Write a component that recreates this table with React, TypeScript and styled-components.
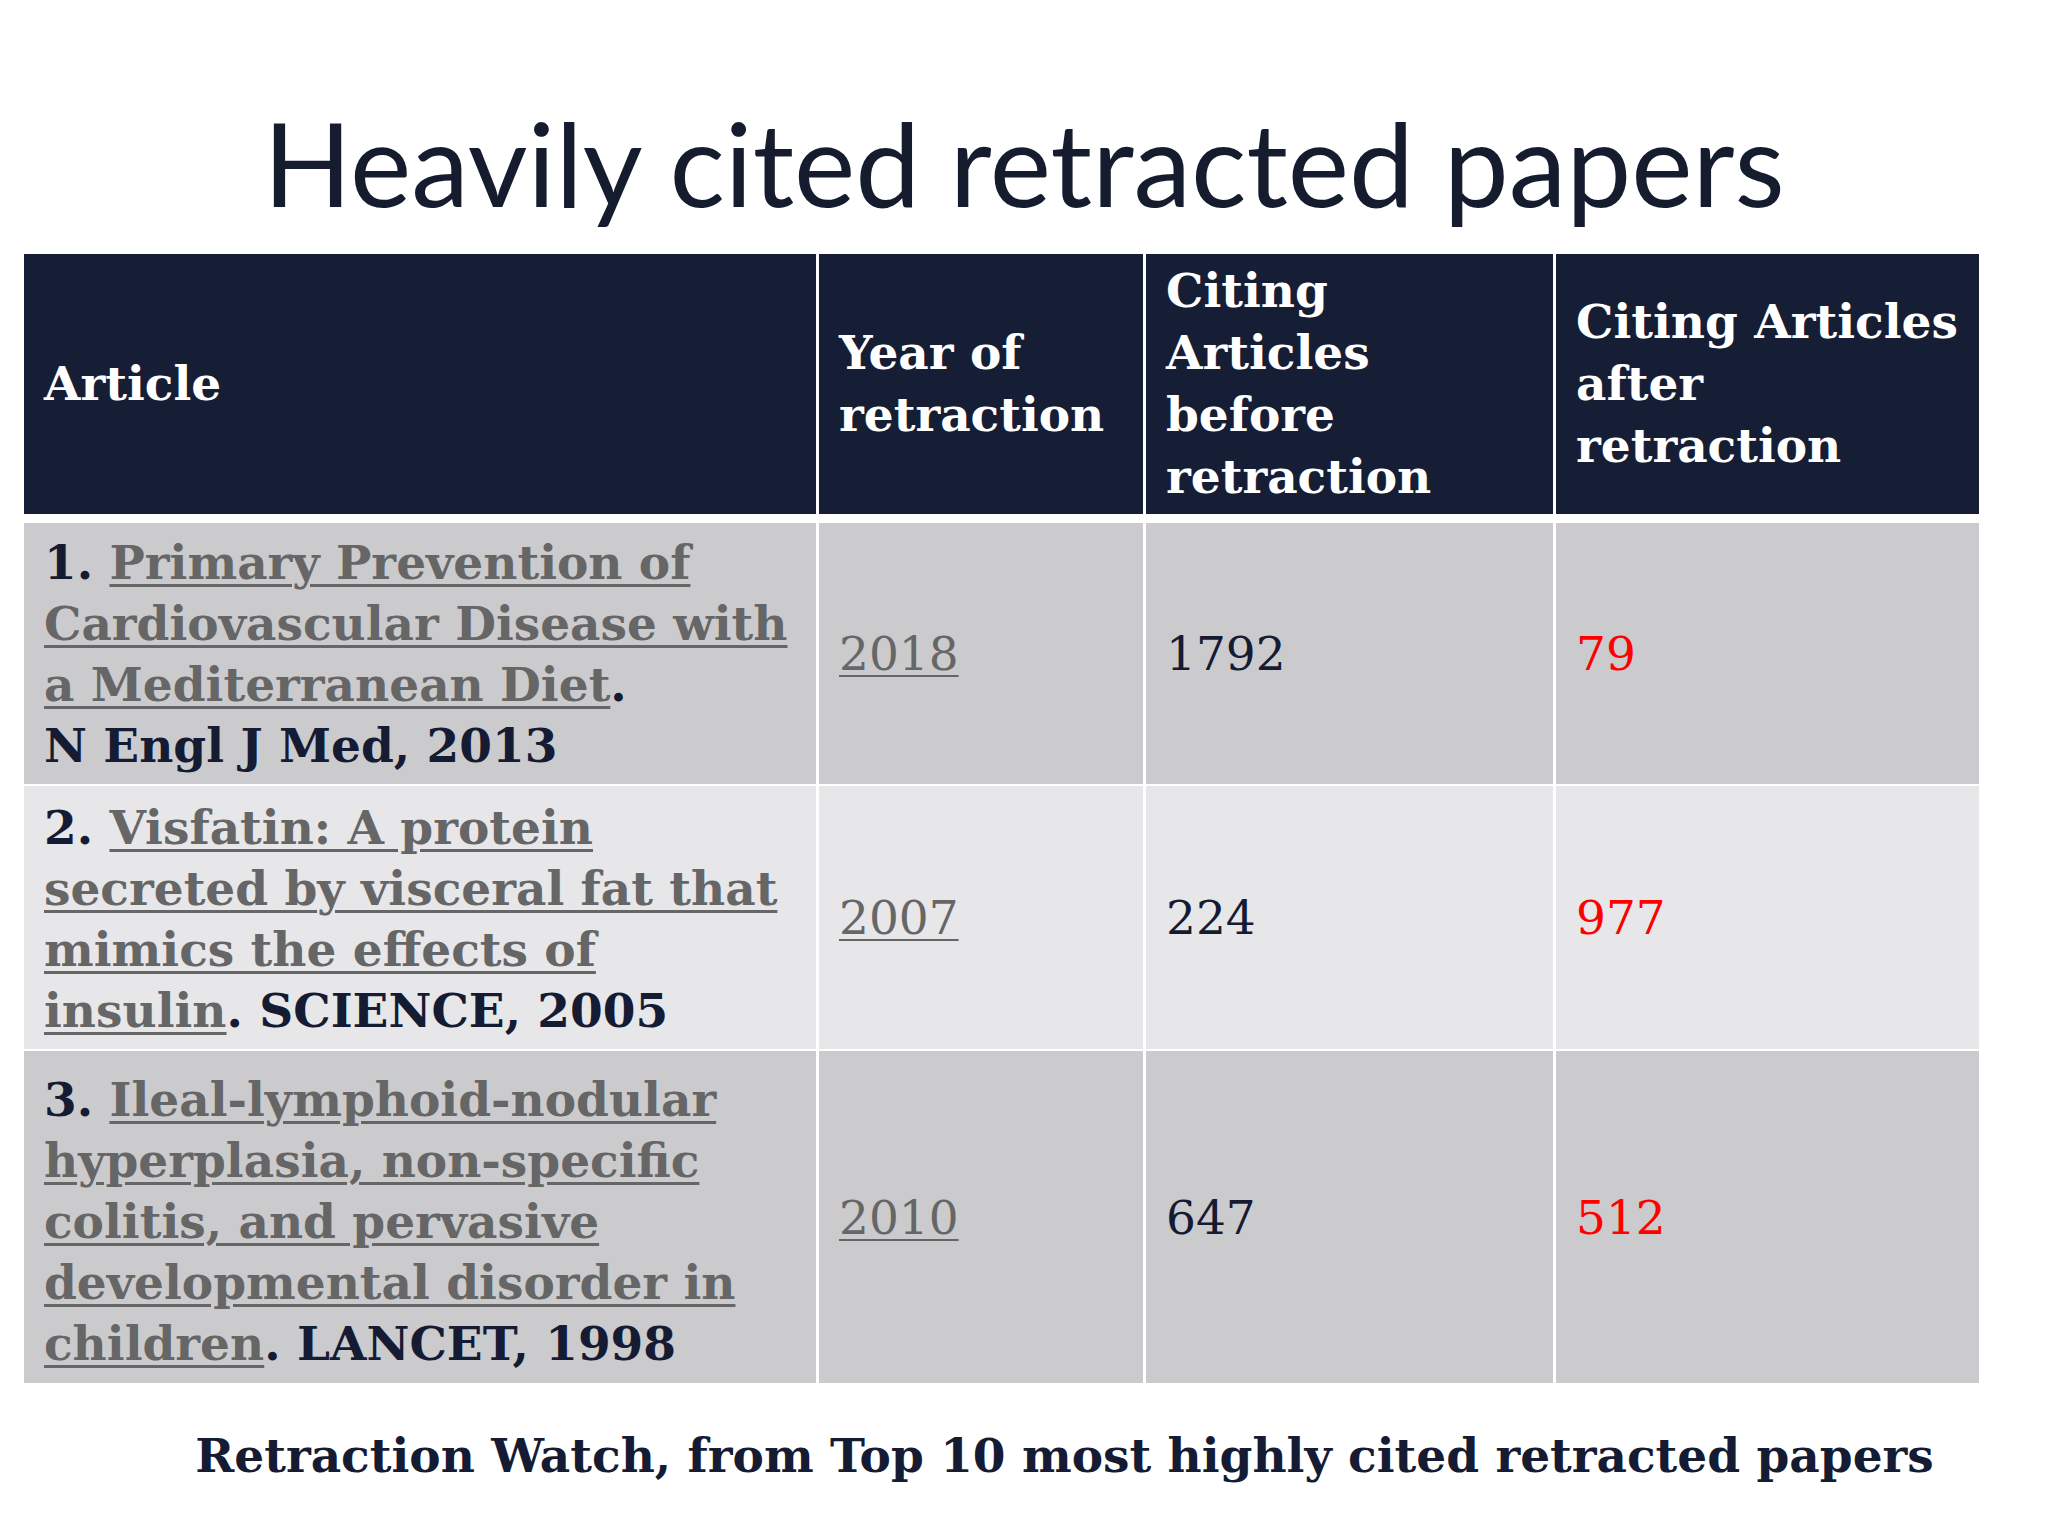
import React from "react";
import styled, { createGlobalStyle } from "styled-components";

const GlobalStyle = createGlobalStyle`
  html, body { margin: 0; padding: 0; background: #ffffff; }
  body { width: 2048px; height: 1536px; overflow: hidden; }
`;

const Slide = styled.div`
  width: 2048px;
  height: 1536px;
  box-sizing: border-box;
  padding: 93px 0 0 0;
  display: flex;
  flex-direction: column;
  background: #ffffff;
`;

const Title = styled.h1`
  margin: 0 0 22px 0;
  width: 2048px;
  text-align: center;
  font-family: Lato, "Open Sans", sans-serif;
  font-weight: 400;
  font-size: 116px;
  line-height: 139px;
  color: #141c2e;
`;

const Grid = styled.div`
  display: grid;
  grid-template-columns: 792px 324px 407px 423px;
  column-gap: 3px;
  row-gap: 2px;
  width: 1955px;
  margin-left: 24px;
  font-family: "DejaVu Serif", "Liberation Serif", serif;
`;

const HeaderCell = styled.div`
  background: #161e35;
  color: #ffffff;
  height: 260px;
  margin-bottom: 7px;
  box-sizing: border-box;
  padding: 0 20px;
  display: flex;
  flex-direction: column;
  justify-content: center;
  font-weight: 700;
  font-size: 47px;
  line-height: 62px;
  white-space: nowrap;
`;

const Cell = styled.div<{ $shade: "dark" | "light"; $h: number; $shift: number }>`
  background: ${(p) => (p.$shade === "dark" ? "#cbcbcd" : "#e7e7e9")};
  height: ${(p) => p.$h}px;
  box-sizing: border-box;
  padding: ${(p) => p.$shift}px 20px 0 20px;
  display: flex;
  flex-direction: column;
  justify-content: center;
  font-size: 47px;
  line-height: 61px;
  color: #141b33;
  white-space: nowrap;
`;

const ArticleText = styled.div`
  font-weight: 700;
`;

const Num = styled.span`
  font-weight: 700;
  color: #141b33;
`;

const LinkText = styled.span`
  color: #666666;
  text-decoration: underline;
  text-decoration-thickness: 3px;
  text-underline-offset: 5px;
`;

const Journal = styled.span`
  color: #141b33;
`;

const YearLink = styled.span`
  color: #666666;
  font-weight: 400;
  text-decoration: underline;
  text-decoration-thickness: 2px;
  text-underline-offset: 5px;
`;

const Value = styled.span<{ $red?: boolean }>`
  font-weight: 400;
  color: ${(p) => (p.$red ? "#ff0000" : "#141b33")};
`;

const Footer = styled.div`
  margin-top: 42px;
  width: 2048px;
  padding-left: 81px;
  box-sizing: border-box;
  text-align: center;
  font-family: "DejaVu Serif", "Liberation Serif", serif;
  font-weight: 700;
  font-size: 47px;
  line-height: 61px;
  color: #141b33;
  white-space: nowrap;
`;

type Row = {
  n: string;
  titleLines: string[];
  tail: string;
  tailOnOwnLine: boolean;
  year: string;
  before: string;
  after: string;
  shade: "dark" | "light";
  h: number;
  shift: number;
};

const rows: Row[] = [
  {
    n: "1.",
    titleLines: ["Primary Prevention of", "Cardiovascular Disease with", "a Mediterranean Diet"],
    tail: "N Engl J Med, 2013",
    tailOnOwnLine: true,
    year: "2018",
    before: "1792",
    after: "79",
    shade: "dark",
    h: 261,
    shift: 0,
  },
  {
    n: "2.",
    titleLines: ["Visfatin: A protein", "secreted by visceral fat that", "mimics the effects of", "insulin"],
    tail: " SCIENCE, 2005",
    tailOnOwnLine: false,
    year: "2007",
    before: "224",
    after: "977",
    shade: "light",
    h: 263,
    shift: 2,
  },
  {
    n: "3.",
    titleLines: [
      "Ileal-lymphoid-nodular",
      "hyperplasia, non-specific",
      "colitis, and pervasive",
      "developmental disorder in",
      "children",
    ],
    tail: " LANCET, 1998",
    tailOnOwnLine: false,
    year: "2010",
    before: "647",
    after: "512",
    shade: "dark",
    h: 332,
    shift: 8,
  },
];

function ArticleCell({ r }: { r: Row }) {
  const last = r.titleLines.length - 1;
  return (
    <ArticleText>
      {r.titleLines.map((line, i) => (
        <div key={i}>
          {i === 0 && <Num>{r.n} </Num>}
          <LinkText>{line}</LinkText>
          {i === last && <Journal>.{r.tailOnOwnLine ? "" : r.tail}</Journal>}
        </div>
      ))}
      {r.tailOnOwnLine && (
        <div>
          <Journal>{r.tail}</Journal>
        </div>
      )}
    </ArticleText>
  );
}

export default function App() {
  return (
    <>
      <GlobalStyle />
      <Slide>
        <Title>Heavily cited retracted papers</Title>
        <Grid>
          <HeaderCell>Article</HeaderCell>
          <HeaderCell>
            <div>Year of</div>
            <div>retraction</div>
          </HeaderCell>
          <HeaderCell>
            <div>Citing</div>
            <div>Articles</div>
            <div>before</div>
            <div>retraction</div>
          </HeaderCell>
          <HeaderCell>
            <div>Citing Articles</div>
            <div>after</div>
            <div>retraction</div>
          </HeaderCell>
          {rows.map((r) => (
            <React.Fragment key={r.n}>
              <Cell $shade={r.shade} $h={r.h} $shift={r.shift}>
                <ArticleCell r={r} />
              </Cell>
              <Cell $shade={r.shade} $h={r.h} $shift={0}>
                <div>
                  <YearLink>{r.year}</YearLink>
                </div>
              </Cell>
              <Cell $shade={r.shade} $h={r.h} $shift={0}>
                <div>
                  <Value>{r.before}</Value>
                </div>
              </Cell>
              <Cell $shade={r.shade} $h={r.h} $shift={0}>
                <div>
                  <Value $red>{r.after}</Value>
                </div>
              </Cell>
            </React.Fragment>
          ))}
        </Grid>
        <Footer>Retraction Watch, from Top 10 most highly cited retracted papers</Footer>
      </Slide>
    </>
  );
}
